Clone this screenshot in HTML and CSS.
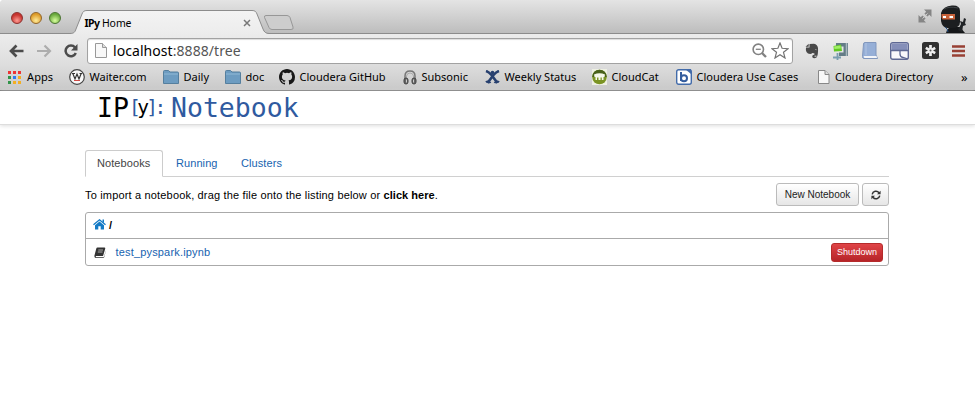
FILE: index.html
```html
<!DOCTYPE html>
<html lang="en">
<head>
<meta charset="utf-8">
<title>IPy Home</title>
<link rel="stylesheet" href="styles.css">
</head>
<body>
<div class="chrome">
  <div class="titlebar">
    <div class="lights"><i class="light red"></i><i class="light yellow"></i><i class="light green"></i></div>
    <div class="tab">
      <svg class="tab-shape" width="230" height="24" viewBox="0 0 230 24"><defs><linearGradient id="tg" x1="0" y1="0" x2="0" y2="1"><stop offset="0" stop-color="#f3f3f3"/><stop offset="1" stop-color="#ececec"/></linearGradient></defs><path d="M0 23.5C4 23.5 5 22 6 19L12 4C13 1.500 14 .5 17 .5H182C185 .5 186 1.500 187 4L193 19C194 22 196 23.500 199 23.500V25H0Z" fill="url(#tg)"/><path d="M0 23.5C4 23.5 5 22 6 19L12 4C13 1.500 14 .5 17 .5H182C185 .5 186 1.500 187 4L193 19C194 22 196 23.500 199 23.500" fill="none" stroke="#8c8c8c"/></svg>
      <span class="tab-title"><b>IPy</b> Home</span>
      <svg class="tab-close" width="8" height="8" viewBox="0 0 8 8"><path d="M1 1L7 7M7 1L1 7" stroke="#777" stroke-width="1.500"/></svg>
    </div>
    <svg class="newtab" width="33" height="16" viewBox="0 0 33 16"><path d="M3 .5H24Q26 .5 27 2.500L30 12Q31 14.500 28 14.500H9Q7 14.500 6 12.500L1.500 2.500Q1 .5 3 .5Z" fill="#cdcdcd" stroke="#979797"/></svg>
    <span class="spacer"></span>
    <svg class="expand" width="14" height="14" viewBox="0 0 14 14" fill="#858585"><path d="M6 .5H13.500V8L11.300 5.800L9.500 7.600L6.400 4.500L8.200 2.700ZM.5 6L2.700 8.200L4.500 6.400L7.600 9.500L5.800 11.300L8 13.500H.5Z"/><path d="M4.500 9.500L9.500 4.500" stroke="#cfcfcf" stroke-width="1"/></svg>
    <svg class="ninja" width="28" height="28" viewBox="0 0 28 28"><path d="M6 28Q7 24 10 22H20L25 28Z" fill="#151719"/><path d="M1 8Q3 1 12 .5Q20 0 20 6V17Q20 23 12 23H7Q2 22 1 16Z" fill="#1c1e20"/><path d="M4 4Q9 1 18 3" fill="none" stroke="#43484b"/><path d="M1.500 9H15V14.500H2.500Q1 13 1.500 9Z" fill="#c8623a"/><path d="M3 11H6V13H3ZM9.500 11H13V13H9.500Z" fill="#fff"/><path d="M5 22Q8 24 8 27" fill="none" stroke="#234d80"/><path d="M18 25L21 19L20 16L23 17L24 13L26 14L25 18L26 20L23 21L22 27Z" fill="#202326"/></svg>
  </div>
  <div class="toolbar">
    <svg class="nav back" width="16" height="14" viewBox="0 0 16 14"><path d="M14.500 7H3M7.500 1.500L2 7L7.500 12.500" fill="none" stroke="#4b4b4b" stroke-width="2.700"/></svg>
    <svg class="nav forward" width="16" height="14" viewBox="0 0 16 14"><path d="M1 7H13M8.500 1.500L14 7L8.500 12.500" fill="none" stroke="#adadad" stroke-width="2.200"/></svg>
    <svg class="nav reload" width="16" height="14" viewBox="0 0 16 14"><path d="M12 3.500A5.300 5.300 0 1 0 12.800 9" fill="none" stroke="#4b4b4b" stroke-width="2.500"/><path d="M14.500 0V6.500H8Z" fill="#4b4b4b"/></svg>
    <div class="omnibox">
      <svg class="page-icon" width="12" height="15" viewBox="0 0 12 15"><path d="M.5 .5H7.500L11.500 4.500V14.500H.5Z" fill="#f8f8f8" stroke="#999"/><path d="M7.500 .5V4.500H11.500" fill="#ddd" stroke="#999"/></svg>
      <span class="url">localhost<span>:8888/tree</span></span>
      <span class="spacer"></span>
      <svg class="mag" width="15" height="15" viewBox="0 0 15 15" fill="none" stroke="#828282"><circle cx="6.300" cy="6.300" r="5.200" stroke-width="1.600"/><path d="M3.800 6.300H8.800" stroke-width="1.300"/><path d="M10 10L14 14" stroke-width="2.300"/></svg>
      <svg width="18" height="17" viewBox="0 0 18 17"><path d="M9 1L11.100 6.300L17 6.700L12.500 10.300L14 16L9 12.800L4 16L5.500 10.300L1 6.700L6.900 6.300Z" fill="#fff" stroke="#727272" stroke-width="1.200"/></svg>
    </div>
    <div class="extensions">
      <svg width="14" height="16" viewBox="0 0 14 16"><path d="M4.500 1L9 .8Q12.500 1.500 13 5Q13.400 12 11.500 14.500Q9 16 7.500 14.500Q6.500 12 9.500 11.500V10.500Q7 9.500 6.500 10.800Q3 11.500 1.500 9Q.5 7 1 4.500H4.500Z" fill="#494949"/><path d="M.5 3.800L3.700 .8V3.800Z" fill="#494949"/><path d="M9.800 6.500Q11.300 5.500 11.800 7.300Z" fill="#ddd"/><path d="M9.500 13.200H11.500" stroke="#ddd"/></svg>
      <svg width="17" height="18" viewBox="0 0 17 18"><path d="M4 1H16V14H7V10.500H11.500V4.500H4Z" fill="#637c86"/><path d="M14.500 1V14" stroke="#a8b7bc" stroke-width="1.500"/><path d="M1.500 4L9 2.500L10 9L2 9.500Z" fill="#62c923"/><path d="M2 4.500L8.500 3.500L8.800 6.500L2.500 7Z" fill="#a0ef66"/><path d="M1 15.500H9M5.500 11V18" stroke="#7b9eb0" stroke-width="1.800"/></svg>
      <svg width="16" height="18" viewBox="0 0 16 18"><path d="M3 .5H14V13L15.500 16.500H2Q.5 16.500 .5 14.500L1.500 2Q1.500 .5 3 .5Z" fill="#96afd7" stroke="#8197bd"/><path d="M2 14H14.500L15 16H2.500Q1 15 2 14Z" fill="#f3f5f9"/><path d="M4 1V13" stroke="#b1c4e2"/></svg>
      <svg width="19" height="18" viewBox="0 0 19 18"><rect x=".7" y=".7" width="17.600" height="16.600" rx="2" fill="#f8f8fb" stroke="#5e6893" stroke-width="1.400"/><path d="M1.500 1.500H17.500V8H1.500Z" fill="#858fb9"/><path d="M1 8.500H10V12Q10 15 13 15.500L18 17M10 8.500H18" fill="none" stroke="#5e6893" stroke-width="1.300"/></svg>
      <svg width="17" height="17" viewBox="0 0 17 17"><rect width="17" height="17" rx="2.500" fill="#303030"/><path d="M8.500 3V14M3.800 5.800L13.200 11.200M13.200 5.800L3.800 11.200" stroke="#eee" stroke-width="2.700"/><circle cx="8.500" cy="8.500" r="1" fill="#555"/></svg>
      <svg width="13" height="12" viewBox="0 0 13 12"><path d="M0 1.500H13M0 6H13M0 10.500H13" stroke="#984034" stroke-width="2.600"/></svg>
    </div>
  </div>
  <div class="bookmarks">
    <div class="bm apps"><svg width="13" height="13" viewBox="0 0 13 13"><path d="M0 0H3V3H0ZM5 0H8V3H5ZM10 0H13V3H10Z" fill="#ed3434"/><path d="M0 5H3V8H0Z" fill="#309448"/><path d="M5 5H8V8H5Z" fill="#307cf0"/><path d="M10 5H13V8H10ZM5 10H8V13H5ZM10 10H13V13H10Z" fill="#f3ae22"/><path d="M0 10H3V13H0Z" fill="#309448"/></svg><span>Apps</span></div>
    <div class="bm"><svg width="16" height="16" viewBox="0 0 16 16"><circle cx="8" cy="8" r="7.300" fill="#f8f8f8" stroke="#444" stroke-width="1.200"/><path d="M3 4.500H6M3.800 4.500L6 10L8 5L10 10L12.200 4.500M10.500 4.500H13.300" fill="none" stroke="#333" stroke-width="1.200"/><path d="M5 11.500H11" stroke="#cf4a45"/></svg><span>Waiter.com</span></div>
    <div class="bm"><svg width="16" height="14" viewBox="0 0 16 14"><path d="M.5 13.500V1.500Q.5 .5 1.500 .5H5.500L7 2H14.500Q15.500 2 15.500 3V13.500Z" fill="#6d9cc1" stroke="#557f9e"/><path d="M1 4H15" stroke="#91b9d6"/></svg><span>Daily</span></div>
    <div class="bm"><svg width="16" height="14" viewBox="0 0 16 14"><path d="M.5 13.500V1.500Q.5 .5 1.500 .5H5.500L7 2H14.500Q15.500 2 15.500 3V13.500Z" fill="#6d9cc1" stroke="#557f9e"/><path d="M1 4H15" stroke="#91b9d6"/></svg><span>doc</span></div>
    <div class="bm"><svg width="16" height="16" viewBox="0 0 16 16"><path fill="#181818" d="M8 0C3.580 0 0 3.580 0 8c0 3.540 2.290 6.530 5.470 7.590.4.070.55-.17.55-.38 0-.19-.01-.82-.01-1.490-2.010.37-2.530-.49-2.690-.94-.09-.23-.48-.94-.82-1.130-.28-.15-.68-.52-.01-.53.63-.01 1.080.58 1.230.82.72 1.210 1.870.87 2.330.66.07-.52.28-.87.51-1.070-1.780-.2-3.640-.89-3.640-3.950 0-.87.31-1.590.82-2.150-.08-.2-.36-1.020.08-2.120 0 0 .67-.21 2.200.82a7.600 7.600 0 0 1 4 0c1.530-1.040 2.200-.82 2.200-.82.44 1.100.16 1.920.08 2.120.51.56.82 1.270.82 2.150 0 3.070-1.870 3.750-3.650 3.950.29.25.54.73.54 1.480 0 1.070-.01 1.930-.01 2.200 0 .21.15.46.55.38A8 8 0 0 0 16 8c0-4.420-3.580-8-8-8z"/></svg><span>Cloudera GitHub</span></div>
    <div class="bm"><svg width="14" height="15" viewBox="0 0 14 15"><path d="M2 10V6Q2 1 7 1T12 6V10" fill="none" stroke="#777" stroke-width="1.500"/><path d="M3.500 10V6Q4 3 7 3T10.500 6V10" fill="none" stroke="#aaa"/><rect x="1" y="8" width="4" height="6" rx="2" fill="#666" stroke="#444"/><rect x="9" y="8" width="4" height="6" rx="2" fill="#666" stroke="#444"/><path d="M3.500 9.500V12.500M10.500 9.500V12.500" stroke="#ccc"/></svg><span>Subsonic</span></div>
    <div class="bm"><svg width="15" height="15" viewBox="0 0 15 15"><circle cx="7.500" cy="2.500" r="1.800" fill="#27406f"/><path d="M1 1Q4 2 6.500 5L12.500 13M14 1Q11 2 8.500 5L2.500 13" fill="none" stroke="#27406f" stroke-width="2.600"/><path d="M.8 12Q3.500 10.500 5.500 13M14.200 12Q11.500 10.500 9.500 13" fill="none" stroke="#27406f" stroke-width="2"/></svg><span>Weekly Status</span></div>
    <div class="bm"><svg width="15" height="16" viewBox="0 0 15 16"><path d="M0 0H15V16H0Z" fill="#eef0e3"/><circle cx="7.500" cy="8" r="7.300" fill="#7b9424"/><path d="M.2 8A7.300 7.300 0 0 1 14.800 8Z" fill="#49611b"/><path d="M2 5.500Q7.500 3 13 5.500L12.500 8H11.500V11H9.800V8.500H8.500V11H6.500V8.500H5V11H3.500V8H2.500Z" fill="#f5f7e8"/></svg><span>CloudCat</span></div>
    <div class="bm"><svg width="16" height="16" viewBox="0 0 16 16"><rect x=".7" y=".7" width="14.600" height="14.600" rx="2" fill="#fff" stroke="#426baa" stroke-width="1.400"/><path d="M9 0H15V5Z" fill="#426baa"/><path d="M5 3V12" stroke="#345d9e" stroke-width="2"/><circle cx="8" cy="9.300" r="3" fill="none" stroke="#345d9e" stroke-width="2"/></svg><span>Cloudera Use Cases</span></div>
    <div class="bm dir"><svg width="12" height="14" viewBox="0 0 12 14"><path d="M.5 .5H7L11 4.500V13.500H.5Z" fill="#f8f8f8" stroke="#888"/><path d="M7 .5V4.500H11" fill="#ddd" stroke="#888"/></svg><span>Cloudera Directory</span></div>
    <div class="bm more">»</div>
  </div>
</div>
<header class="header"><div class="logo"><span class="ip">IP</span><span class="y"><em>[</em>y<em>]:</em></span><span class="nb">Notebook</span></div></header>
<main class="main">
  <nav class="tabs"><a class="active">Notebooks</a><a class="running">Running</a><a class="clusters">Clusters</a></nav>
  <div class="tools">
    <span class="hint">To import a notebook, drag the file onto the listing below or <b>click here</b>.</span>
    <button class="btn new">New Notebook</button>
    <button class="btn refresh"><svg width="10" height="10" viewBox="0 0 10 10"><path d="M1.200 4.300A3.800 3.800 0 0 1 8 2.800M8.800 5.700A3.800 3.800 0 0 1 2 7.200" fill="none" stroke="#333" stroke-width="1.500"/><path d="M9.600 .7V4.300H6ZM.4 9.300V5.700H4Z" fill="#333"/></svg></button>
  </div>
  <div class="list">
    <div class="row path"><svg width="13" height="11" viewBox="0 0 13 11" fill="#147bc6"><path d="M6.500 2.400L11 6.200V10.500H7.700V7.200H5.300V10.500H2V6.200Z"/><path d="M.5 5.700L6.500 .8L12.500 5.700" fill="none" stroke="#147bc6" stroke-width="1.300"/><path d="M9.500 .6H11V4L9.500 2.800Z"/></svg><b>/</b></div>
    <div class="row file"><svg width="12" height="11" viewBox="0 0 12 11"><path d="M3.500 .5H10.500Q11.500 .7 11.200 1.700L9.200 8.500Q9 9 8.300 9H2Q1.300 10 2.300 10.200H9.500Q10 10 10.300 9L11.800 3.500V4L10.300 10Q10 11 9 11H2Q.2 10.700 .4 8.800L2.300 1.600Q2.500 .6 3.500 .5Z" fill="#333"/><path d="M4.300 3H9M3.800 5H8.500" stroke="#ccc" stroke-width=".8"/></svg><a>test_pyspark.ipynb</a><button class="shutdown">Shutdown</button></div>
  </div>
</main>
</body>
</html>
```
FILE: styles.css
```css
* { box-sizing: border-box; }
body { margin: 0; background: #fff; color: #000; font: 11px/16px "Liberation Sans", Arial, sans-serif; overflow: hidden; }
svg { display: block; flex: none; }
.spacer { flex: 1; }
.chrome { height: 91px; background: #d8d8d8; border-bottom: 1px solid #777; font-family: "Noto Sans", "Open Sans", sans-serif; border-radius: 4px 4px 0 0; }
.titlebar { height: 34px; display: flex; align-items: flex-start; background: linear-gradient(#e4e4e4, #bdbdbd); border-bottom: 1px solid #8c8c8c; border-radius: 4px 4px 0 0; }
.lights { display: flex; gap: 7px; padding: 12px 0 0 11px; width: 70px; }
.light { width: 12px; height: 12px; border-radius: 50%; border: 1px solid #666; }
.red { background: radial-gradient(circle at 50% 75%, #ff9b92, #c7342f 65%); border-color: #8c302d; }
.yellow { background: radial-gradient(circle at 50% 75%, #ffec9a, #dd9a27 70%); border-color: #92652a; }
.green { background: radial-gradient(circle at 50% 75%, #d8ff9e, #68a83c 70%); border-color: #4b7431; }
.tab { position: relative; width: 193px; height: 24px; margin-top: 10px; display: flex; align-items: center; padding: 1px 0 0 14.5px; }
.tab-shape { position: absolute; left: 0; top: 0; }
.tab-title { position: relative; width: 158.5px; font-size: 10.5px; letter-spacing: -.1px; }
.tab-title b { letter-spacing: -.6px; }
.tab-close { position: relative; }
.newtab { margin-top: 15px; position: relative; }
.expand { margin: 9px 8px 0 0; }
.ninja { margin: 5px 7px 0 0; }
.toolbar { height: 30px; display: flex; align-items: center; padding: 0 10px 0 9px; background: linear-gradient(#ececec, #dedede); }
.nav { margin: 3px 11px 0 0; }
.reload { margin-right: 8px; }
.omnibox { width: 706px; height: 26px; margin-top: 3px; display: flex; align-items: center; padding: 0 3px 0 7px; background: #fff; border: 1px solid #a2a2a2; border-radius: 3px; box-shadow: inset 0 1px 1px #ddd; }
.url { margin-left: 6px; font-size: 14px; line-height: 20px; letter-spacing: .06px; }
.url span { color: #555; }
.mag { margin-right: 4px; }
.extensions { display: flex; flex: 1; align-items: center; justify-content: space-between; margin: 3px 0 0 12px; }
.bookmarks { height: 26px; padding: 0 0 0 8px; display: grid; grid-template-columns: 61px 94px 62px 54px 124px 82px 107px 84px 142px 143px 20px; align-items: center; background: linear-gradient(#dedede, #c9c9c9); }
.bm { display: flex; align-items: center; gap: 4.5px; font-size: 11px; white-space: nowrap; }
.apps { gap: 6px; letter-spacing: .1px; }
.dir { gap: 5px; letter-spacing: .06px; }
.more { font-size: 13px; line-height: 14px; }
.header { height: 34px; border-bottom: 1px solid #ddd; box-shadow: 0 1px 4px #ddd; padding-left: 97px; }
.logo { display: flex; align-items: center; font-family: "DejaVu Sans Mono", monospace; font-size: 26.5px; line-height: 34px; color: #2f5a9f; }
.ip { color: #000; width: 33px; }
.y { width: 42px; font-size: 19.5px; letter-spacing: -2.6px; color: #000; white-space: nowrap; margin-left: -1px; }
.y em { font-style: normal; color: #2f5a9f; letter-spacing: -3.6px; }
.main { width: 804px; margin: 25px 0 0 85px; }
.tabs { height: 27px; display: flex; border-bottom: 1px solid #d0d0d0; color: #1763b0; letter-spacing: .08px; }
.tabs a { padding: 4px 11px; height: 27px; border: 1px solid transparent; }
.tabs .active { width: 78px; color: #444; background: #fff; border-color: #ccc #ccc #fff; border-radius: 3px 3px 0 0; }
.tabs .running { width: 66px; padding-left: 12px; }
.tools { height: 35px; display: flex; align-items: center; }
.hint { flex: 1; letter-spacing: .17px; }
.hint b { letter-spacing: .04px; }
.btn { height: 23px; margin: 0 0 0 3px; padding: 0; border: 1px solid #bbb; border-radius: 3px; background: linear-gradient(#fff, #e6e6e6); font: 10px "Liberation Sans", sans-serif; color: #222; display: flex; align-items: center; justify-content: center; }
.new { width: 83px; }
.refresh { width: 27px; }
.list { height: 54px; border: 1px solid #aaa; border-radius: 3px; }
.row { height: 26px; display: flex; align-items: center; padding-left: 7px; }
.path { border-bottom: 1px solid #aaa; gap: 3px; padding-bottom: 2px; }
.file { padding: 0 5px 0 8px; }
.file a { color: #1763b0; margin-left: 9.5px; flex: 1; letter-spacing: .17px; }
.shutdown { width: 52px; height: 19px; padding: 0; color: #fff; border: 1px solid #b52b2b; border-radius: 3px; background: linear-gradient(#e04447, #b62428); font: 9px "Liberation Sans", sans-serif; }
```
